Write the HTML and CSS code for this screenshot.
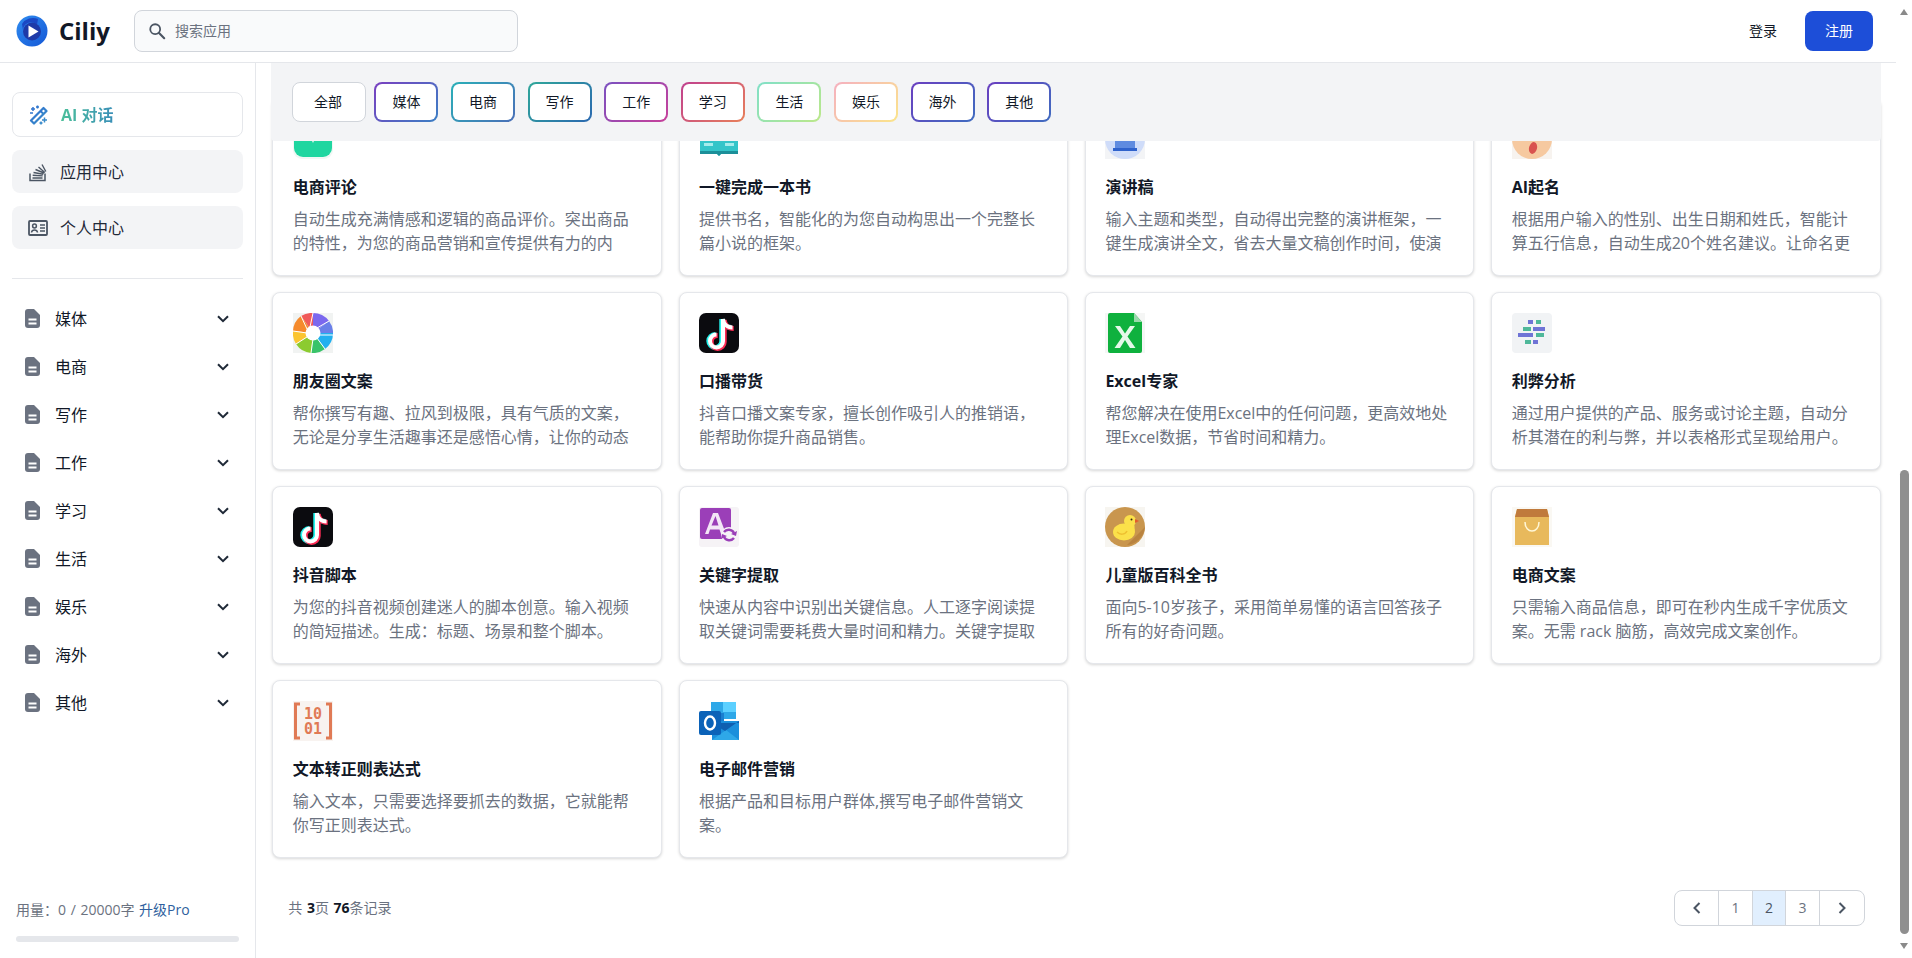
FILE: index.html
```html
<!DOCTYPE html>
<html lang="zh-CN">
<head>
<meta charset="utf-8">
<title>Ciliy</title>
<link rel="stylesheet" href="styles.css">
</head>
<body>
<div class="page">
  <header class="topbar">
    <div class="brand">
      <svg class="logo" viewBox="0 0 32 32"><defs><linearGradient id="lg" x1="0" y1="0" x2="1" y2="1"><stop offset="0" stop-color="#2f8cf0"/><stop offset="1" stop-color="#1558d6"/></linearGradient></defs><circle cx="16" cy="16" r="15.5" fill="url(#lg)"/><path d="M6 9a13 13 0 0 1 16-5l-1 6a8 8 0 0 0-14 5z" fill="#1b48c4"/><circle cx="16" cy="16.500" r="9" fill="#1e3aa8"/><path d="M12.500 10.500v12l10-6z" fill="#fff"/></svg>
      <span class="brand-name">Ciliy</span>
    </div>
    <div class="search">
      <svg class="search-icon" viewBox="0 0 20 20"><circle cx="8" cy="8" r="5.500" fill="none" stroke="#4b5563" stroke-width="2"/><path d="M12 12l6 6" stroke="#4b5563" stroke-width="2.400" stroke-linecap="round"/></svg>
      <span class="search-text">搜索应用</span>
    </div>
    <div class="actions">
      <a class="login">登录</a>
      <a class="register">注册</a>
    </div>
  </header>
  <div class="body">
    <aside class="sidebar">
      <div class="nav">
        <a class="nav-item nav-active">
          <svg class="nav-icon" viewBox="0 0 20 20"><defs><linearGradient id="wg" x1="0" y1="0" x2="1" y2="1"><stop offset="0" stop-color="#2f6fd0"/><stop offset="1" stop-color="#3a90c8"/></linearGradient></defs><path d="M2 15.500L14.500 3 17.500 6 5 18.500z" fill="none" stroke="url(#wg)" stroke-width="2.200" stroke-linejoin="round"/><path d="M11.500 6l3 3" stroke="url(#wg)" stroke-width="2"/><path d="M4 2v4M2 4h4M8.500 .5v3M7 2h3M1 8h3M15.500 12.500v5M13 15h5M12 16.500v3M10.500 18h3" stroke="url(#wg)" stroke-width="1.500"/></svg>
          <span class="nav-label nav-label-active">AI 对话</span>
        </a>
        <a class="nav-item">
          <svg class="nav-icon" viewBox="0 0 20 20"><path d="M2 11.500V18.500h15v-7" fill="none" stroke="#4b5563" stroke-width="1.500"/><path d="M4.500 16h10M4.700 13.300l10 .6M5.500 10.500l9.800 1.700M7.500 7.500l8.500 3.500M10.500 5l6.300 5.500M14 2.500l3.800 7" stroke="#4b5563" stroke-width="1.400"/></svg>
          <span class="nav-label">应用中心</span>
        </a>
        <a class="nav-item">
          <svg class="nav-icon" viewBox="0 0 20 20"><rect x="1" y="3" width="18" height="14" rx="1" fill="none" stroke="#4b5563" stroke-width="1.800"/><circle cx="6.500" cy="8" r="1.900" fill="none" stroke="#4b5563" stroke-width="1.500"/><path d="M3.500 14.500c.5-3.500 5.500-3.500 6 0M12 7h5M12 10h5M12 13h5" fill="none" stroke="#4b5563" stroke-width="1.500"/></svg>
          <span class="nav-label">个人中心</span>
        </a>
      </div>
      <div class="menu">
        <a class="menu-item"><svg class="file" viewBox="0 0 15 19"><path d="M3 0h6l6 6v10a3 3 0 0 1-3 3H3a3 3 0 0 1-3-3V3a3 3 0 0 1 3-3z" fill="#6b7280"/><path d="M3.500 9.500h8v2h-8zM3.500 13.500h8v2h-8z" fill="#fff"/></svg><span class="menu-label">媒体</span><svg class="chev" viewBox="0 0 12 8"><path d="M1 1.200l5 5 5-5" fill="none" stroke="#1f2937" stroke-width="2"/></svg></a>
        <a class="menu-item"><svg class="file" viewBox="0 0 15 19"><path d="M3 0h6l6 6v10a3 3 0 0 1-3 3H3a3 3 0 0 1-3-3V3a3 3 0 0 1 3-3z" fill="#6b7280"/><path d="M3.500 9.500h8v2h-8zM3.500 13.500h8v2h-8z" fill="#fff"/></svg><span class="menu-label">电商</span><svg class="chev" viewBox="0 0 12 8"><path d="M1 1.200l5 5 5-5" fill="none" stroke="#1f2937" stroke-width="2"/></svg></a>
        <a class="menu-item"><svg class="file" viewBox="0 0 15 19"><path d="M3 0h6l6 6v10a3 3 0 0 1-3 3H3a3 3 0 0 1-3-3V3a3 3 0 0 1 3-3z" fill="#6b7280"/><path d="M3.500 9.500h8v2h-8zM3.500 13.500h8v2h-8z" fill="#fff"/></svg><span class="menu-label">写作</span><svg class="chev" viewBox="0 0 12 8"><path d="M1 1.200l5 5 5-5" fill="none" stroke="#1f2937" stroke-width="2"/></svg></a>
        <a class="menu-item"><svg class="file" viewBox="0 0 15 19"><path d="M3 0h6l6 6v10a3 3 0 0 1-3 3H3a3 3 0 0 1-3-3V3a3 3 0 0 1 3-3z" fill="#6b7280"/><path d="M3.500 9.500h8v2h-8zM3.500 13.500h8v2h-8z" fill="#fff"/></svg><span class="menu-label">工作</span><svg class="chev" viewBox="0 0 12 8"><path d="M1 1.200l5 5 5-5" fill="none" stroke="#1f2937" stroke-width="2"/></svg></a>
        <a class="menu-item"><svg class="file" viewBox="0 0 15 19"><path d="M3 0h6l6 6v10a3 3 0 0 1-3 3H3a3 3 0 0 1-3-3V3a3 3 0 0 1 3-3z" fill="#6b7280"/><path d="M3.500 9.500h8v2h-8zM3.500 13.500h8v2h-8z" fill="#fff"/></svg><span class="menu-label">学习</span><svg class="chev" viewBox="0 0 12 8"><path d="M1 1.200l5 5 5-5" fill="none" stroke="#1f2937" stroke-width="2"/></svg></a>
        <a class="menu-item"><svg class="file" viewBox="0 0 15 19"><path d="M3 0h6l6 6v10a3 3 0 0 1-3 3H3a3 3 0 0 1-3-3V3a3 3 0 0 1 3-3z" fill="#6b7280"/><path d="M3.500 9.500h8v2h-8zM3.500 13.500h8v2h-8z" fill="#fff"/></svg><span class="menu-label">生活</span><svg class="chev" viewBox="0 0 12 8"><path d="M1 1.200l5 5 5-5" fill="none" stroke="#1f2937" stroke-width="2"/></svg></a>
        <a class="menu-item"><svg class="file" viewBox="0 0 15 19"><path d="M3 0h6l6 6v10a3 3 0 0 1-3 3H3a3 3 0 0 1-3-3V3a3 3 0 0 1 3-3z" fill="#6b7280"/><path d="M3.500 9.500h8v2h-8zM3.500 13.500h8v2h-8z" fill="#fff"/></svg><span class="menu-label">娱乐</span><svg class="chev" viewBox="0 0 12 8"><path d="M1 1.200l5 5 5-5" fill="none" stroke="#1f2937" stroke-width="2"/></svg></a>
        <a class="menu-item"><svg class="file" viewBox="0 0 15 19"><path d="M3 0h6l6 6v10a3 3 0 0 1-3 3H3a3 3 0 0 1-3-3V3a3 3 0 0 1 3-3z" fill="#6b7280"/><path d="M3.500 9.500h8v2h-8zM3.500 13.500h8v2h-8z" fill="#fff"/></svg><span class="menu-label">海外</span><svg class="chev" viewBox="0 0 12 8"><path d="M1 1.200l5 5 5-5" fill="none" stroke="#1f2937" stroke-width="2"/></svg></a>
        <a class="menu-item"><svg class="file" viewBox="0 0 15 19"><path d="M3 0h6l6 6v10a3 3 0 0 1-3 3H3a3 3 0 0 1-3-3V3a3 3 0 0 1 3-3z" fill="#6b7280"/><path d="M3.500 9.500h8v2h-8zM3.500 13.500h8v2h-8z" fill="#fff"/></svg><span class="menu-label">其他</span><svg class="chev" viewBox="0 0 12 8"><path d="M1 1.200l5 5 5-5" fill="none" stroke="#1f2937" stroke-width="2"/></svg></a>
      </div>
      <div class="usage">
        <div class="usage-text">用量：0 / 20000字 <a class="upgrade">升级Pro</a></div>
        <div class="usage-bar"></div>
      </div>
    </aside>
    <main class="main">
      <div class="filters">
        <a class="chip chip-all">全部</a>
        <a class="chip chip-media">媒体</a>
        <a class="chip chip-shop">电商</a>
        <a class="chip chip-write">写作</a>
        <a class="chip chip-work">工作</a>
        <a class="chip chip-study">学习</a>
        <a class="chip chip-life">生活</a>
        <a class="chip chip-fun">娱乐</a>
        <a class="chip chip-abroad">海外</a>
        <a class="chip chip-other">其他</a>
      </div>
      <div class="grid">
        <article class="card">
          <svg class="card-icon" viewBox="0 0 40 40"><rect width="40" height="40" rx="9" fill="#f0f7f4"/><rect x="1" y="1" width="38" height="37" rx="9" fill="#1fd6a0"/><path d="M13 22h6l1 2 1-2h6v-4H13z" fill="#d6f7ec"/></svg>
          <h3 class="card-title">电商评论</h3>
          <p class="card-desc">自动生成充满情感和逻辑的商品评价。突出商品的特性，为您的商品营销和宣传提供有力的内</p>
        </article>
        <article class="card">
          <svg class="card-icon" viewBox="0 0 40 40"><path d="M1 8h38v27H22l-2 2-2-2H1z" fill="#34c5c9"/><path d="M1 32h38v3H22l-2 2-2-2H1z" fill="#1c8f99"/><rect x="5" y="24" width="9" height="3" fill="#a5ecec"/><rect x="26" y="24" width="9" height="3" fill="#a5ecec"/></svg>
          <h3 class="card-title">一键完成一本书</h3>
          <p class="card-desc">提供书名，智能化的为您自动构思出一个完整长篇小说的框架。</p>
        </article>
        <article class="card">
          <svg class="card-icon" viewBox="0 0 40 40"><rect width="40" height="40" fill="#f3f4f6"/><circle cx="20" cy="20" r="20" fill="#cfdcf9"/><rect x="10" y="16" width="20" height="13" fill="#5f8be0"/><rect x="8" y="29" width="24" height="3" fill="#2f62cc"/></svg>
          <h3 class="card-title">演讲稿</h3>
          <p class="card-desc">输入主题和类型，自动得出完整的演讲框架，一键生成演讲全文，省去大量文稿创作时间，使演</p>
        </article>
        <article class="card">
          <svg class="card-icon" viewBox="0 0 40 40"><rect width="40" height="40" fill="#f7f3ef"/><circle cx="20" cy="20" r="20" fill="#f6c9a0"/><ellipse cx="21" cy="29" rx="4" ry="6" fill="#d9534f" transform="rotate(15 21 29)"/></svg>
          <h3 class="card-title">AI起名</h3>
          <p class="card-desc">根据用户输入的性别、出生日期和姓氏，智能计算五行信息，自动生成20个姓名建议。让命名更</p>
        </article>
        <article class="card">
          <svg class="card-icon" viewBox="0 0 40 40"><rect width="40" height="40" fill="#f1f3f2"/><path d="M20 20L8 3A20 20 0 0 1 20 0z" fill="#f05a5a"/><path d="M20 20V0a20 20 0 0 1 16 8z" fill="#7b68ee"/><path d="M20 20L36 8a20 20 0 0 1 4 14z" fill="#6a7fe8"/><path d="M20 20h20a20 20 0 0 1-8 16z" fill="#22b0ef"/><path d="M20 20l12 16a20 20 0 0 1-14 4z" fill="#39c36a"/><path d="M20 20l-2 20A20 20 0 0 1 3 31z" fill="#8ccb30"/><path d="M20 20L3 31A20 20 0 0 1 0 18z" fill="#fbc531"/><path d="M20 20L0 18A20 20 0 0 1 8 3z" fill="#f58a2c"/><path class="blade" d="M8 3l6 13M20 0l-3 14M36 8l-12 7M40 22l-14 0M32 36l-8-11M18 40l2-14M3 31l11-7M0 18l14 2"/><circle cx="20" cy="20" r="7.500" fill="#fff"/></svg>
          <h3 class="card-title">朋友圈文案</h3>
          <p class="card-desc">帮你撰写有趣、拉风到极限，具有气质的文案，无论是分享生活趣事还是感悟心情，让你的动态</p>
        </article>
        <article class="card">
          <svg class="card-icon" viewBox="0 0 40 40"><rect width="40" height="40" rx="7" fill="#0b0b0f"/><path class="tt tt-cyan" d="M24 6v22a6.500 6.500 0 1 1-6.500-6.500M24 6c.5 5 4 8.500 9.500 8.500" transform="translate(-1.200 0)"/><path class="tt tt-red" d="M24 6v22a6.500 6.500 0 1 1-6.500-6.500M24 6c.5 5 4 8.500 9.500 8.500" transform="translate(1.200 1)"/><path class="tt tt-white" d="M24 6v22a6.500 6.500 0 1 1-6.500-6.500M24 6c.5 5 4 8.500 9.500 8.500"/></svg>
          <h3 class="card-title">口播带货</h3>
          <p class="card-desc">抖音口播文案专家，擅长创作吸引人的推销语，能帮助你提升商品销售。</p>
        </article>
        <article class="card">
          <svg class="card-icon" viewBox="0 0 40 40"><rect width="40" height="40" fill="#f5f6f5"/><path d="M5 0h24l8 9v29a2 2 0 0 1-2 2H5a2 2 0 0 1-2-2V2a2 2 0 0 1 2-2z" fill="#0fb13e"/><path d="M29 0l8 9h-8z" fill="#9ad9ac"/><path d="M10 13h5l5 7.500 5-7.500h5l-7.500 10.500L30.500 35H25l-5-8-5 8H9.500l8-11.500z" fill="#e5f8ea"/></svg>
          <h3 class="card-title">Excel专家</h3>
          <p class="card-desc">帮您解决在使用Excel中的任何问题，更高效地处理Excel数据，节省时间和精力。</p>
        </article>
        <article class="card">
          <svg class="card-icon" viewBox="0 0 40 40"><rect width="40" height="40" rx="4" fill="#f1f3f5"/><path d="M16 7h5v4h-5z" fill="#6f74d6"/><path d="M24 7h5v4h-5zM11 14h8v4h-8z" fill="#4fb89a"/><path d="M21 14h12v4H21zM6 20h15v4H6z" fill="#6f74d6"/><path d="M24 20h8v4h-8zM13 27h6v4h-6z" fill="#4fb89a"/><path d="M21 27h5v4h-5z" fill="#6f74d6"/></svg>
          <h3 class="card-title">利弊分析</h3>
          <p class="card-desc">通过用户提供的产品、服务或讨论主题，自动分析其潜在的利与弊，并以表格形式呈现给用户。</p>
        </article>
        <article class="card">
          <svg class="card-icon" viewBox="0 0 40 40"><rect width="40" height="40" rx="7" fill="#0b0b0f"/><path class="tt tt-cyan" d="M24 6v22a6.500 6.500 0 1 1-6.500-6.500M24 6c.5 5 4 8.500 9.500 8.500" transform="translate(-1.200 0)"/><path class="tt tt-red" d="M24 6v22a6.500 6.500 0 1 1-6.500-6.500M24 6c.5 5 4 8.500 9.500 8.500" transform="translate(1.200 1)"/><path class="tt tt-white" d="M24 6v22a6.500 6.500 0 1 1-6.500-6.500M24 6c.5 5 4 8.500 9.500 8.500"/></svg>
          <h3 class="card-title">抖音脚本</h3>
          <p class="card-desc">为您的抖音视频创建迷人的脚本创意。输入视频的简短描述。生成：标题、场景和整个脚本。</p>
        </article>
        <article class="card">
          <svg class="card-icon" viewBox="0 0 40 40"><rect width="40" height="40" rx="3" fill="#f6f3f6"/><rect x="1" y="1" width="31" height="31" rx="2" fill="#9b3fb8"/><path d="M6 27L14 6h5l8 21h-5l-1.500-4.500h-9.500L9.500 27zM12.500 18.500h7L16.500 9z" fill="#f3e6f6" fill-rule="evenodd"/><circle cx="30" cy="28" r="8" fill="#f6f3f6"/><path d="M25 25a6 6 0 0 1 10 1M35 31a6 6 0 0 1-10-1" fill="none" stroke="#9b3fb8" stroke-width="2.500"/><path d="M32 27l5 2 1-5zM28 29l-5-2-1 5z" fill="#9b3fb8"/></svg>
          <h3 class="card-title">关键字提取</h3>
          <p class="card-desc">快速从内容中识别出关键信息。人工逐字阅读提取关键词需要耗费大量时间和精力。关键字提取</p>
        </article>
        <article class="card">
          <svg class="card-icon" viewBox="0 0 40 40"><rect width="40" height="40" fill="#f7f5f0"/><circle cx="20" cy="20" r="20" fill="#c9964e"/><path d="M34 26L22 38A20 20 0 0 0 40 20z" fill="#b98340"/><ellipse cx="19" cy="25" rx="11" ry="8.500" fill="#fbe04a"/><path d="M19 25c0-4 1-6 3-8h7c1 3 1 8-1 12z" fill="#fbe04a"/><circle cx="25" cy="14" r="6" fill="#fbe04a"/><path d="M30 12l4 2-4 2z" fill="#e45a2c"/><circle cx="26.500" cy="12.500" r="1" fill="#3a2a10"/><path d="M12 25c3 3 8 3 10-1" fill="none" stroke="#eebf30" stroke-width="1.500"/></svg>
          <h3 class="card-title">儿童版百科全书</h3>
          <p class="card-desc">面向5-10岁孩子，采用简单易懂的语言回答孩子所有的好奇问题。</p>
        </article>
        <article class="card">
          <svg class="card-icon" viewBox="0 0 40 40"><rect width="40" height="40" fill="#faf8f3"/><path d="M5 2h30l2 8v28H3V10z" fill="#e8b95c"/><path d="M5 2h30l2 8H3z" fill="#c07a3c"/><path d="M13 15c0 12 14 12 14 0" fill="none" stroke="#fff7d6" stroke-width="1.500"/></svg>
          <h3 class="card-title">电商文案</h3>
          <p class="card-desc">只需输入商品信息，即可在秒内生成千字优质文案。无需 rack 脑筋，高效完成文案创作。</p>
        </article>
        <article class="card">
          <svg class="card-icon" viewBox="0 0 40 40"><rect width="40" height="40" fill="#f8f3f0"/><path d="M7 3H2.500v34H7M33 3h4.500v34H33" fill="none" stroke="#e07a55" stroke-width="3"/><text class="binary" x="20" y="18">10</text><text class="binary" x="20" y="33">01</text></svg>
          <h3 class="card-title">文本转正则表达式</h3>
          <p class="card-desc">输入文本，只需要选择要抓去的数据，它就能帮你写正则表达式。</p>
        </article>
        <article class="card">
          <svg class="card-icon" viewBox="0 0 40 40"><path d="M12 1h24a3 3 0 0 1 1 1v16H12z" fill="#2ea8e8"/><path d="M24 1h13v10H24z" fill="#5cd0ff"/><path d="M12 12h13v10H12z" fill="#1a7fd0"/><path d="M13 20h27v19H13z" fill="#1a8fdc"/><path d="M13 39l14-10 13 10z" fill="#2ea8e8"/><path d="M40 20L26 30 13 22h27z" fill="#0f5fb0"/><rect y="10" width="22" height="24" rx="2" fill="#0b62b8"/><ellipse cx="11" cy="22" rx="5" ry="6.500" fill="none" stroke="#fff" stroke-width="2.400"/></svg>
          <h3 class="card-title">电子邮件营销</h3>
          <p class="card-desc">根据产品和目标用户群体,撰写电子邮件营销文案。</p>
        </article>
      </div>
      <div class="footer">
        <div class="total">共 <b>3</b>页 <b>76</b>条记录</div>
        <div class="pager">
          <a class="pg pg-prev"><svg class="pg-chev" viewBox="0 0 8 12"><path d="M6.500 1L1.500 6l5 5" fill="none" stroke="#4b5563" stroke-width="2"/></svg></a>
          <a class="pg pg-num">1</a>
          <a class="pg pg-num pg-current">2</a>
          <a class="pg pg-num">3</a>
          <a class="pg pg-next"><svg class="pg-chev" viewBox="0 0 8 12"><path d="M1.500 1l5 5-5 5" fill="none" stroke="#4b5563" stroke-width="2"/></svg></a>
        </div>
      </div>
    </main>
  </div>
</div>
<div class="scrollbar">
  <span class="arrow-up"></span>
  <div class="track"><div class="thumb"></div></div>
  <span class="arrow-down"></span>
</div>
</body>
</html>
```
FILE: styles.css
```css
* { box-sizing: border-box; }
html, body { height: 100%; }
body {
  margin: 0;
  height: 958px;
  overflow: hidden;
  display: flex;
  background: #fff;
  color: #111827;
  font-family: "Open Sans", "Noto Sans CJK SC", sans-serif;
  font-size: 16px;
}
a { color: inherit; text-decoration: none; }
svg { display: block; flex: none; }

.page { flex: 1; min-width: 0; display: flex; flex-direction: column; }

.topbar {
  height: 63px;
  flex: none;
  display: flex;
  align-items: center;
  padding: 0 23px 1px 16px;
  border-bottom: 1px solid #e5e7eb;
  background: #fff;
}
.brand { display: flex; align-items: center; gap: 11px; width: 118px; }
.logo { width: 32px; height: 32px; }
.brand-name { font-size: 24px; font-weight: 700; color: #111827; line-height: 32px; }
.search {
  width: 384px;
  height: 42px;
  display: flex;
  align-items: center;
  padding-left: 13px;
  gap: 9px;
  background: #f9fafb;
  border: 1px solid #d1d5db;
  border-radius: 8px;
}
.search-icon { width: 18px; height: 18px; }
.search-text { font-size: 14px; color: #6b7280; padding-bottom: 2px; }
.actions { margin-left: auto; display: flex; align-items: center; gap: 28px; }
.login { font-size: 14px; color: #111827; padding-bottom: 2px; }
.register {
  width: 68px;
  height: 40px;
  display: flex;
  align-items: center;
  justify-content: center;
  padding-bottom: 2px;
  background: #1d4ed8;
  color: #fff;
  font-size: 14px;
  border-radius: 8px;
}

.body { flex: 1; min-height: 0; display: flex; }

.sidebar {
  width: 256px;
  flex: none;
  display: flex;
  flex-direction: column;
  border-right: 1px solid #e5e7eb;
  padding: 29px 12px 16px;
}
.nav {
  display: flex;
  flex-direction: column;
  gap: 13px;
  padding-bottom: 29px;
  border-bottom: 1px solid #e5e7eb;
}
.nav-item {
  height: 43px;
  display: flex;
  align-items: center;
  gap: 12px;
  padding-left: 16px;
  background: #f3f4f6;
  border-radius: 8px;
  color: #1f2937;
}
.nav-label { padding-bottom: 2px; }
.nav-active {
  height: 45px;
  background: #fff;
  border: 1px solid #e5e7eb;
  font-weight: 700;
}
.nav-label-active {
  background: linear-gradient(90deg, #4bbf9a, #3a8fb8);
  -webkit-background-clip: text;
  background-clip: text;
  color: transparent;
}
.nav-icon { width: 20px; height: 20px; }

.menu { display: flex; flex-direction: column; margin-top: 16px; }
.menu-item {
  height: 48px;
  display: flex;
  align-items: center;
  padding: 0 14px 2px 13px;
  color: #111827;
}
.file { width: 15px; height: 19px; }
.menu-label { margin-left: 15px; flex: 1; }
.chev { width: 12px; height: 8px; margin-top: 2px; }

.usage { margin-top: auto; padding: 0 4px; }
.usage-text { font-size: 14px; line-height: 20px; color: #6b7280; padding-bottom: 2px; word-spacing: 1px; }
.upgrade { color: #2f5f9e; }
.usage-bar { height: 6px; margin-top: 14px; width: 223px; background: #e5e7eb; border-radius: 3px; }

.main {
  position: relative;
  flex: 1;
  min-width: 0;
  padding: 35px 15.5px 0 16.25px;
  overflow: hidden;
}
.filters {
  position: absolute;
  top: 0;
  left: 15px;
  right: 15px;
  height: 78px;
  z-index: 2;
  display: flex;
  align-items: center;
  gap: 12.6px;
  padding-left: 21px;
  background: #f3f4f6;
  border-radius: 0 0 4px 4px;
}
.chip {
  width: 64px;
  height: 40px;
  display: flex;
  align-items: center;
  justify-content: center;
  padding-bottom: 2px;
  font-size: 14px;
  color: #111827;
  border: 2px solid transparent;
  border-radius: 8px;
  background-origin: border-box;
  background-clip: padding-box, border-box;
}
.chip-all { width: 74px; margin-right: -4.2px; padding-right: 2px; border: 1px solid #d1d5db; background: #fff; }
.chip-media  { background-image: linear-gradient(#fff, #fff), linear-gradient(135deg, #7a3fc0, #3b7fc4); }
.chip-shop   { background-image: linear-gradient(#fff, #fff), linear-gradient(135deg, #2ab0b8, #4a6fb8); }
.chip-write  { background-image: linear-gradient(#fff, #fff), linear-gradient(135deg, #30a89a, #2a68b0); }
.chip-work   { background-image: linear-gradient(#fff, #fff), linear-gradient(135deg, #7a50c0, #c8409a); }
.chip-study  { background-image: linear-gradient(#fff, #fff), linear-gradient(135deg, #c0408f, #e8805a); }
.chip-life   { background-image: linear-gradient(#fff, #fff), linear-gradient(135deg, #80e0c8, #bce88a); }
.chip-fun    { background-image: linear-gradient(#fff, #fff), linear-gradient(135deg, #f5b0c0, #fbe58a); }
.chip-abroad { background-image: linear-gradient(#fff, #fff), linear-gradient(135deg, #6a3fc0, #3f6cc0); }
.chip-other  { background-image: linear-gradient(#fff, #fff), linear-gradient(135deg, #6a3fc0, #3f6cc0); }

.grid {
  display: grid;
  grid-template-columns: repeat(4, 1fr);
  gap: 16px 17px;
}
.card {
  height: 178px;
  padding: 20px 19px 20px 19.5px;
  background: #fff;
  border: 1px solid #e5e7eb;
  border-radius: 8px;
  box-shadow: 0 1px 3px rgba(0, 0, 0, .16);
}
.card-icon { width: 40px; height: 40px; }
.card-title {
  margin: 16px 0 0;
  font-size: 16px;
  line-height: 24px;
  font-weight: 700;
  color: #111827;
}
.card-desc {
  margin: 8px 0 0;
  font-size: 16px;
  line-height: 24px;
  color: #6b7280;
}
.tt { fill: none; stroke-width: 5; }
.tt-cyan { stroke: #25f4ee; }
.tt-red { stroke: #fe2c55; }
.tt-white { stroke: #fff; stroke-width: 4; }
.blade { fill: none; stroke: #fff; stroke-width: 1; }
.binary {
  font-family: "DejaVu Sans Mono", monospace;
  font-size: 15px;
  font-weight: 700;
  fill: #e07a55;
  text-anchor: middle;
}

.footer {
  margin-top: 32px;
  display: flex;
  align-items: center;
  justify-content: space-between;
  padding: 0 15.500px 0 16px;
}
.total { font-size: 14px; color: #6b7280; padding-bottom: 2px; word-spacing: 1px; }
.total b { color: #111827; }
.pager {
  display: flex;
  height: 36px;
  background: #fff;
  border: 1px solid #d1d5db;
  border-radius: 8px;
  overflow: hidden;
}
.pg {
  display: flex;
  align-items: center;
  justify-content: center;
  font-size: 14px;
  color: #6b7280;
  border-left: 1px solid #d1d5db;
}
.pg-num { width: 34px; padding-bottom: 2px; }
.pg-prev { width: 43px; border-left: 0; }
.pg-next { width: 45px; }
.pg-current { width: 33px; background: #e1effe; color: #4b5563; }
.pg-chev { width: 8px; height: 12px; }

.scrollbar {
  width: 16px;
  flex: none;
  display: flex;
  flex-direction: column;
  align-items: center;
  background: #fff;
}
.arrow-up, .arrow-down { flex: none; width: 0; height: 0; border-left: 4.5px solid transparent; border-right: 4.5px solid transparent; }
.arrow-up { margin: 9px 0 4px; border-bottom: 6px solid #8a8a8a; }
.arrow-down { margin: 9px 0 9px; border-top: 6px solid #8a8a8a; }
.track { flex: 1; width: 100%; display: flex; flex-direction: column; justify-content: flex-end; }
.thumb { width: 9px; height: 464px; margin-left: 4px; background: #8f8f8f; border-radius: 4.5px; }
```
